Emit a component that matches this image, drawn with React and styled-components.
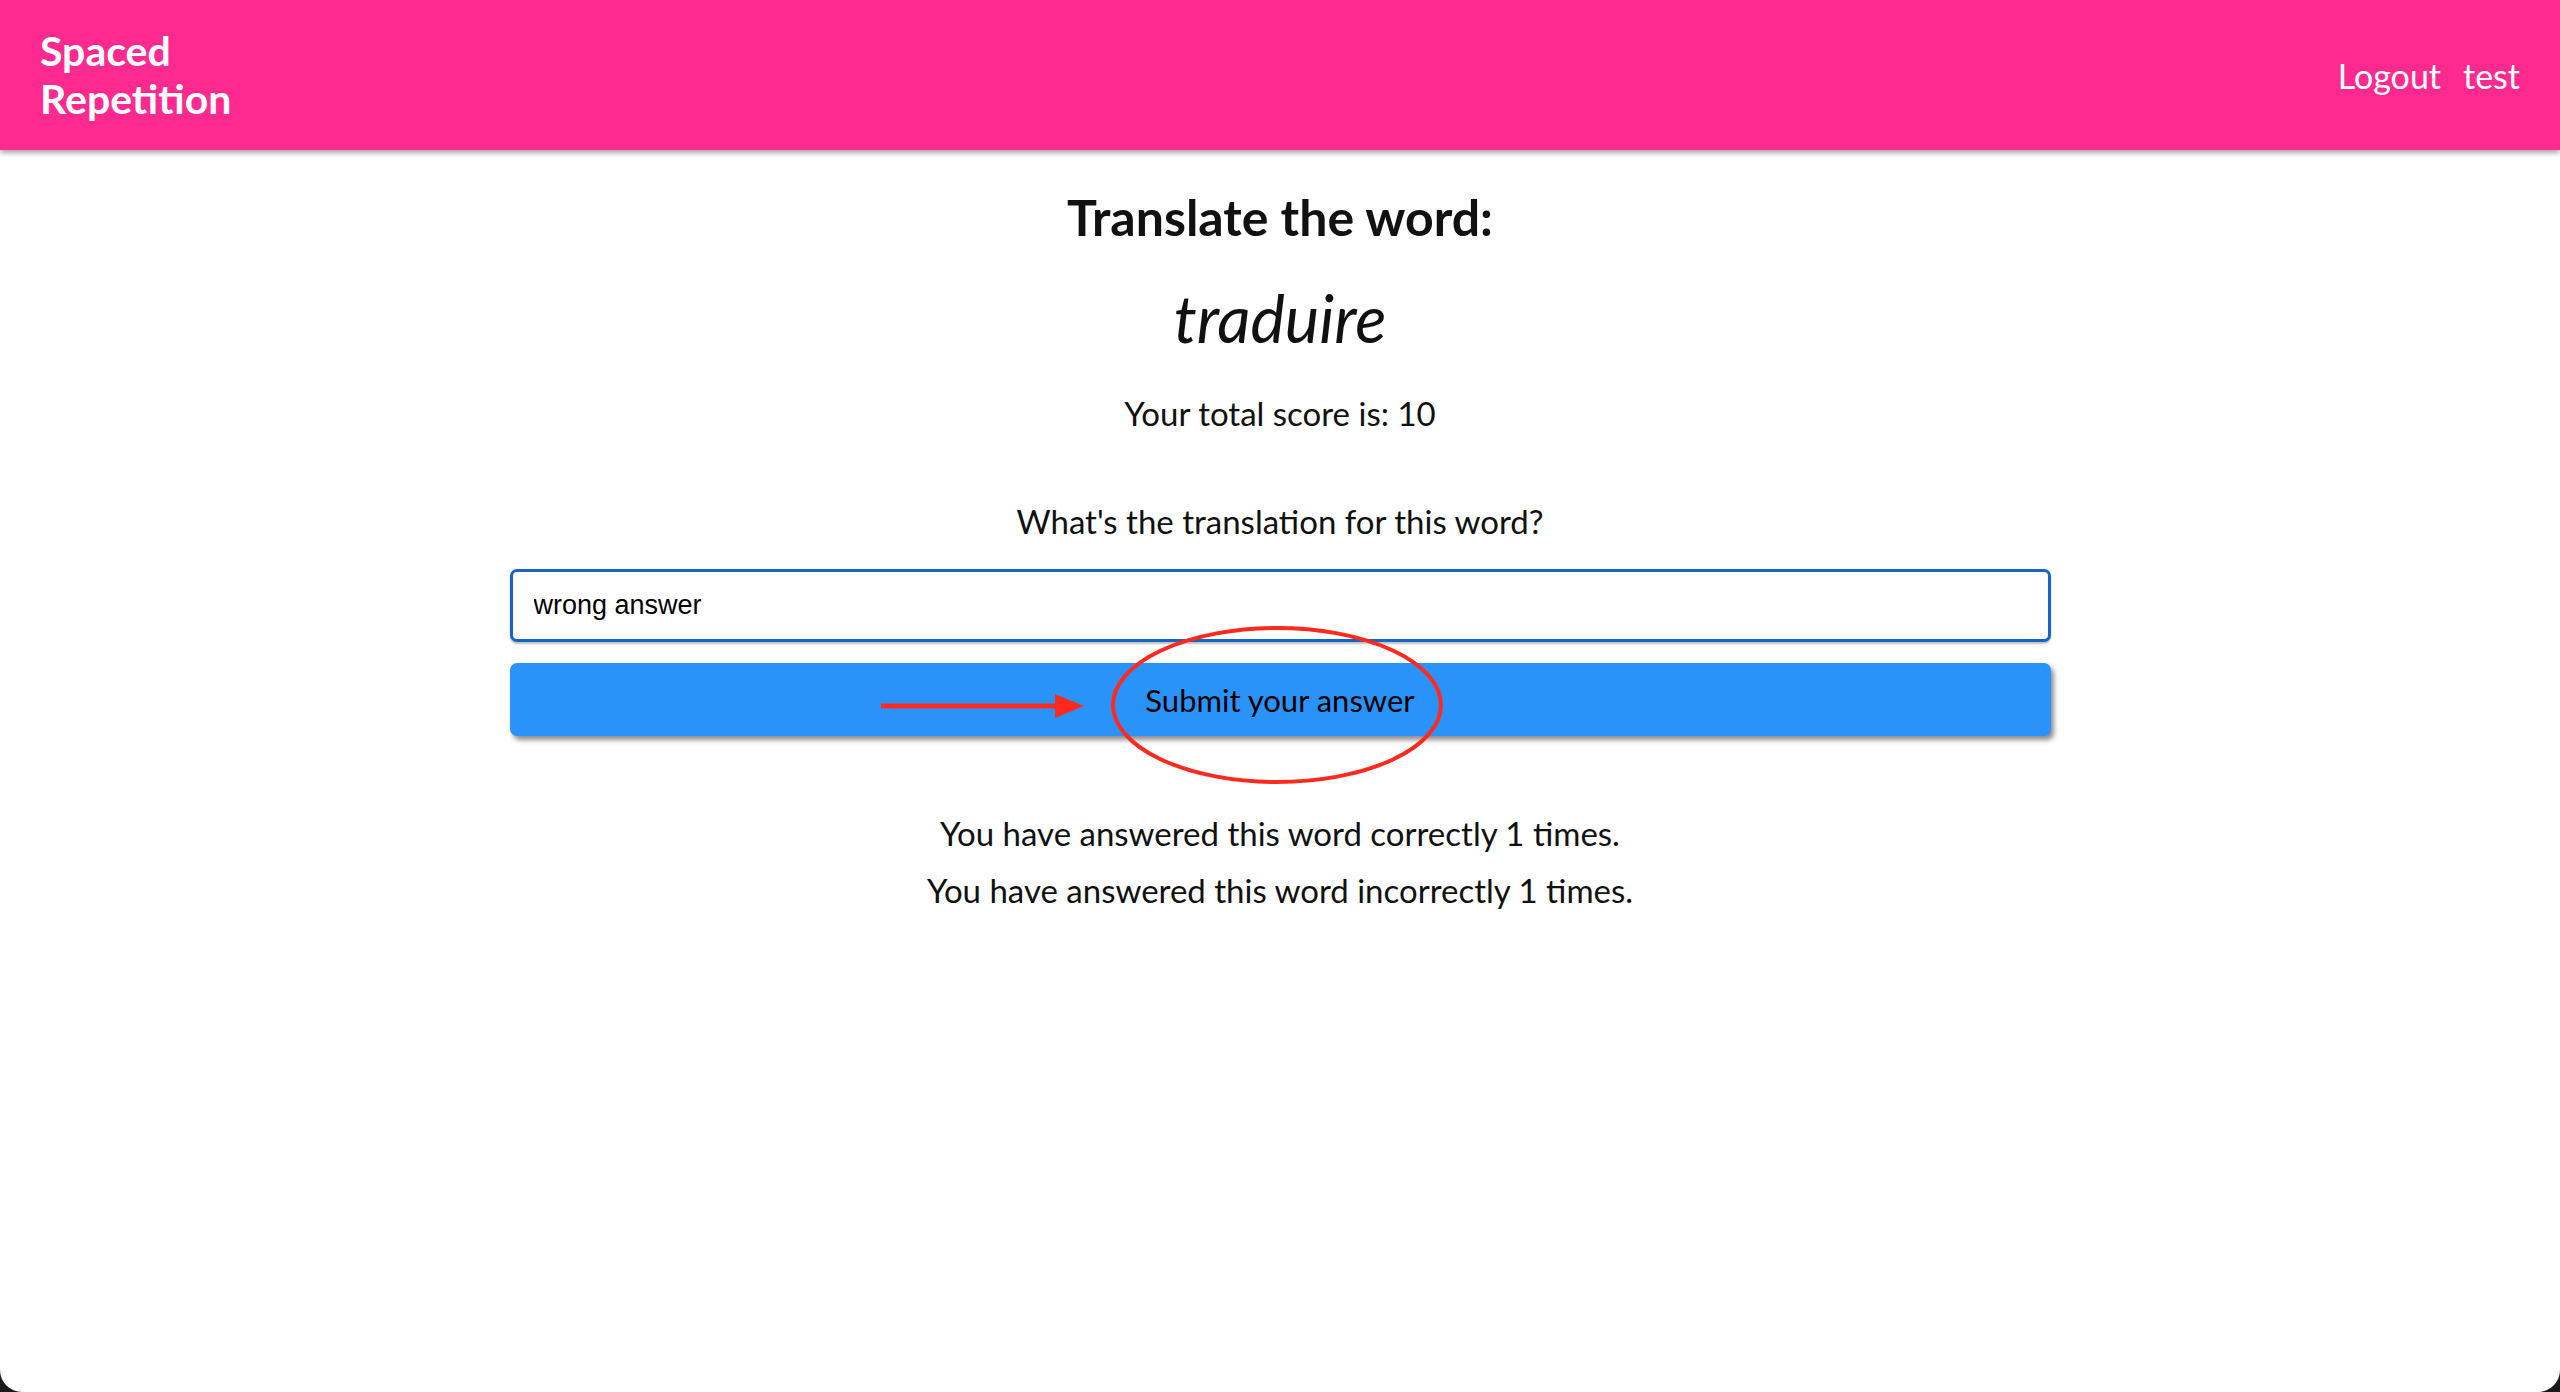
import React from 'react';
import styled, { createGlobalStyle } from 'styled-components';

const GlobalStyle = createGlobalStyle`
  html, body {
    margin: 0;
    padding: 0;
    background: #1a1a1a;
  }
  body {
    font-family: Lato, "Open Sans", sans-serif;
  }
`;

function App() {
    return (
        <>
            <GlobalStyle />
            <Window>
                <Header>
                    <Brand>Spaced<br />Repetition</Brand>
                    <Nav>
                        <NavLink>Logout</NavLink>
                        <NavLink>test</NavLink>
                    </Nav>
                </Header>
                <Main>
                    <Title>Translate the word:</Title>
                    <Word>traduire</Word>
                    <Score>Your total score is: 10</Score>
                    <Form>
                        <Label htmlFor="guess">What's the translation for this word?</Label>
                        <Input id="guess" defaultValue="wrong answer" />
                        <ButtonWrap>
                            <SubmitButton type="button">Submit your answer</SubmitButton>
                            <Annotation width="1541" height="200" viewBox="0 0 1541 200">
                                <line x1="371" y1="100" x2="545" y2="100" stroke="#ff2a1f" strokeWidth="5" />
                                <polygon points="545,88 574,100 545,112" fill="#ff2a1f" />
                                <ellipse cx="767" cy="99" rx="164" ry="77" fill="none" stroke="#ff2a1f" strokeWidth="4" />
                            </Annotation>
                        </ButtonWrap>
                    </Form>
                    <Stats>
                        <StatLine>You have answered this word correctly 1 times.</StatLine>
                        <StatLine>You have answered this word incorrectly 1 times.</StatLine>
                    </Stats>
                </Main>
            </Window>
        </>
    );
}

const Window = styled.div`
  min-height: 100vh;
  background: #fff;
  border-radius: 0 0 22px 22px;
  overflow: hidden;
`;

const Header = styled.header`
  height: 150px;
  background: #ff2a8f;
  display: flex;
  align-items: center;
  justify-content: space-between;
  padding: 0 40px 0 40px;
  box-sizing: border-box;
  box-shadow: 0 3px 5px rgba(0, 0, 0, 0.35);
  position: relative;
`;

const Brand = styled.h1`
  margin: 0;
  color: #fff;
  font-size: 41px;
  font-weight: 700;
  line-height: 48px;
`;

const Nav = styled.nav`
  display: flex;
  gap: 22px;
`;

const NavLink = styled.a`
  color: #fff;
  font-size: 34px;
  cursor: pointer;
`;

const Main = styled.main`
  display: flex;
  flex-direction: column;
  align-items: center;
  text-align: center;
  color: #111;
`;

const Title = styled.h2`
  margin: 39px 0 0;
  font-size: 50px;
  line-height: 56px;
  font-weight: 700;
`;

const Word = styled.div`
  margin-top: 38px;
  font-size: 65px;
  line-height: 70px;
  font-style: italic;
`;

const Score = styled.p`
  margin: 42px 0 0;
  font-size: 33px;
  line-height: 36px;
`;

const Form = styled.form`
  margin-top: 72px;
  width: 1541px;
  display: flex;
  flex-direction: column;
  align-items: stretch;
`;

const Label = styled.label`
  font-size: 33px;
  line-height: 36px;
`;

const Input = styled.input`
  margin-top: 30px;
  height: 73px;
  box-sizing: border-box;
  border: 3px solid #1565c8;
  border-radius: 7px;
  padding: 0 21px;
  font-family: "Liberation Sans", Arial, sans-serif;
  font-size: 27px;
  color: #000;
  box-shadow: 0 2px 2px rgba(0, 0, 0, 0.25);
  outline: none;
`;

const ButtonWrap = styled.div`
  position: relative;
  margin-top: 21px;
`;

const SubmitButton = styled.button`
  width: 100%;
  height: 73px;
  border: none;
  border-radius: 7px;
  background: #2a93f9;
  color: #000;
  font-family: Lato, "Open Sans", sans-serif;
  font-size: 31px;
  box-shadow: 3px 4px 5px rgba(0, 0, 0, 0.45);
  cursor: pointer;
`;

const Annotation = styled.svg`
  position: absolute;
  left: 0;
  top: -57px;
  pointer-events: none;
`;

const Stats = styled.div`
  margin-top: 79px;
  display: flex;
  flex-direction: column;
  gap: 21px;
`;

const StatLine = styled.p`
  margin: 0;
  font-size: 33px;
  line-height: 36px;
`;

export default App;
